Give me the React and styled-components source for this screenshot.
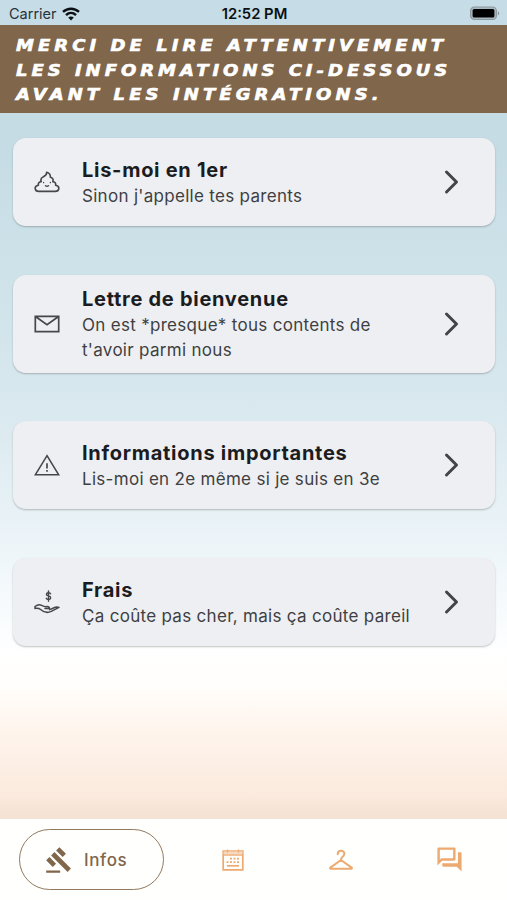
import React from "react";
import styled, { createGlobalStyle } from "styled-components";
import { MdGavel, MdOutlineQuestionAnswer } from "react-icons/md";

const infos = [
  {
    icon: <PooIcon />,
    title: "Lis-moi en 1er",
    text: "Sinon j'appelle tes parents",
    height: 88,
  },
  {
    icon: <MailIcon />,
    title: "Lettre de bienvenue",
    text: "On est *presque* tous contents de t'avoir parmi nous",
    height: 98,
  },
  {
    icon: <WarningIcon />,
    title: "Informations importantes",
    text: "Lis-moi en 2e même si je suis en 3e",
    height: 88,
  },
  {
    icon: <MoneyIcon />,
    title: "Frais",
    text: "Ça coûte pas cher, mais ça coûte pareil",
    height: 88,
  },
];

function App() {
  return (
    <Screen>
      <GlobalStyle />
      <StatusBar />
      <Header>
        <HeaderLine $spacing={3.38}>MERCI DE LIRE ATTENTIVEMENT</HeaderLine>
        <HeaderLine $spacing={3.32}>LES INFORMATIONS CI-DESSOUS</HeaderLine>
        <HeaderLine $spacing={3.42}>AVANT LES INTÉGRATIONS.</HeaderLine>
      </Header>
      <CardList>
        {infos.map((info) => (
          <Card key={info.title} $height={info.height}>
            <CardIcon>{info.icon}</CardIcon>
            <CardText>
              <Title>{info.title}</Title>
              <Subtitle>{info.text}</Subtitle>
            </CardText>
            <Chevron />
          </Card>
        ))}
      </CardList>
      <TabBar>
        <ActiveTab>
          <MdGavel size={28} />
          <span>Infos</span>
        </ActiveTab>
        <Tab>
          <CalendarIcon />
        </Tab>
        <Tab>
          <HangerIcon />
        </Tab>
        <Tab>
          <MdOutlineQuestionAnswer size={29} />
        </Tab>
      </TabBar>
    </Screen>
  );
}

function StatusBar() {
  return (
    <Status>
      <Carrier>
        Carrier
        <svg width="18" height="14" viewBox="0 0 18 14" fill="none">
          <g stroke="#0b1014" strokeWidth="2.5">
            <path d="M1 4.9C5.6 0.6 12.4 0.6 17 4.9" />
            <path d="M4 8.1C6.9 5.4 11.1 5.4 14 8.1" />
          </g>
          <path d="M9 13.4L6.2 10.5C7.8 9.1 10.2 9.1 11.8 10.5Z" fill="#0b1014" />
        </svg>
      </Carrier>
      <Time>12:52 PM</Time>
      <Battery>
        <svg width="31" height="15" viewBox="0 0 31 15">
          <rect x="1.6" y="1" width="25.8" height="12.5" rx="3.8" fill="#a9b9c1" stroke="#8b999f" strokeWidth="1.2" />
          <rect x="3.6" y="3" width="21.8" height="8.6" rx="1.6" fill="#000" />
          <path d="M28.8 5V9.6C30.7 8.7 30.7 5.9 28.8 5Z" fill="#8b999f" />
        </svg>
      </Battery>
    </Status>
  );
}

function PooIcon() {
  return (
    <svg width="26" height="22" viewBox="0 0 26 22" fill="none" stroke="currentColor" strokeWidth="1.6" strokeLinejoin="round" strokeLinecap="round">
      <path d="M12.6 1.3C12.9 3.7 11.2 5 9.4 5.8C7.2 6.8 6.4 8.6 7.2 10.6C5 10.8 4 12.2 4.4 14.2C2.2 14.5 1 15.8 1.2 17.6C1.4 19.4 2.8 20.4 4.8 20.4H21.2C23.2 20.4 24.6 19.4 24.8 17.6C25 15.8 23.8 14.5 21.6 14.2C22 12.2 21 10.8 18.8 10.6C19.6 8.6 18.9 6.9 16.4 6.2C16.5 3.6 15 1.9 12.6 1.3Z" />
      <path d="M9.6 11.5V11.7M16.4 11.5V11.7M11.4 14.7C12.4 15.4 13.6 15.4 14.6 14.7" strokeWidth="1.3" />
    </svg>
  );
}

function MailIcon() {
  return (
    <svg width="26" height="18" viewBox="0 0 26 18" fill="none" stroke="currentColor" strokeWidth="1.7">
      <path d="M1.3 1.3H24.7V16.7H1.3ZM1.8 1.8L13 9.6L24.2 1.8" />
    </svg>
  );
}

function WarningIcon() {
  return (
    <svg width="26" height="22" viewBox="0 0 26 22" fill="none" stroke="currentColor" strokeWidth="1.6">
      <path d="M13 1.7L24.6 20.7H1.4Z" />
      <path d="M13 9.3V14.6M13 16V17.8" strokeWidth="1.7" />
    </svg>
  );
}

function MoneyIcon() {
  return (
    <svg width="26" height="24" viewBox="0 0 26 24" fill="none" stroke="currentColor" strokeWidth="1.6" strokeLinecap="round" strokeLinejoin="round">
      <path d="M16.6 3.8C16 2.4 12.6 2.2 12.4 4.2C12.2 6.4 17 5.4 16.7 7.9C16.5 10 12.9 9.8 12.2 8.3M14.5 1V11.2" strokeWidth="1.4" />
      <path d="M1 18.4V16.5C3.2 14.7 5.6 14.2 7.6 15.3C9.4 16.3 10.8 16.8 12.8 16.6C14.8 16.4 15.6 17.6 15.3 18.4H11M1 18.4C3.2 18 4.8 18 6.6 19.5C9.8 22.4 13.6 23.1 17.2 21.4L25 17.4C23.2 16.8 21.4 17.1 19.4 18L15.6 19.6" strokeWidth="1.5" />
    </svg>
  );
}

function CalendarIcon() {
  return (
    <svg width="22" height="22" viewBox="0 0 22 22" fill="none" stroke="currentColor">
      <path d="M1.2 2H20.8V20.8H1.2Z" strokeWidth="1.7" />
      <path d="M1.5 4H20.5" stroke="#f7d9bf" strokeWidth="2.6" />
      <path d="M1.2 6H20.8" strokeWidth="1.4" />
      <path d="M5.5 0.5V3.5M16.5 0.5V3.5" strokeWidth="1.3" />
      <path d="M8 9.6H18M4.5 13.2H18" strokeWidth="1.8" strokeDasharray="2 1.5" />
      <path d="M5 16.8H17" strokeWidth="1.7" />
    </svg>
  );
}

function HangerIcon() {
  return (
    <svg width="26" height="22" viewBox="0 0 26 22" fill="none" stroke="currentColor" strokeWidth="2" strokeLinejoin="round" strokeLinecap="round">
      <path d="M9.7 5.2C9.7 0.8 16.4 0.8 16.4 4.8C16.4 7.6 13 7.5 13 11L23.6 18.6C24.2 19.1 24 19.8 23.2 19.8H2.8C2 19.8 1.8 19.1 2.4 18.6L13 11" />
    </svg>
  );
}

function Chevron() {
  return (
    <ChevronSvg width="16" height="26" viewBox="0 0 16 26">
      <path d="M2.5 3L12.5 13L2.5 23" />
    </ChevronSvg>
  );
}

const GlobalStyle = createGlobalStyle`
  * {
    box-sizing: border-box;
  }

  body {
    margin: 0;
    font-family: Inter, sans-serif;
  }
`;

const Screen = styled.div`
  height: 900px;

  display: flex;
  flex-direction: column;

  background: linear-gradient(
    #c6dce6 0px,
    #c6dce5 150px,
    #cee2e9 270px,
    #d8e8ee 400px,
    #e7f1f6 510px,
    #f4f9fc 590px,
    #ffffff 655px,
    #fffdfa 690px,
    #fff6ef 722px,
    #fdf0e7 755px,
    #fbeadd 795px,
    #f3e1d3 819px
  );
`;

const Status = styled.div`
  height: 25px;
  flex-shrink: 0;
  padding: 2px 7px 0 9px;

  display: grid;
  grid-template-columns: 1fr auto 1fr;
  align-items: center;

  color: #0b1014;
  font-size: 14.5px;
`;

const Carrier = styled.div`
  display: flex;
  align-items: center;
  gap: 5px;
  color: #26323a;
`;

const Time = styled.div`
  font-weight: 600;
  font-size: 14.8px;
`;

const Battery = styled.div`
  display: flex;
  justify-content: flex-end;
`;

const Header = styled.header`
  height: 88px;
  flex-shrink: 0;
  padding: 9px 16px 0;

  background-color: #80664b;
  color: #fff;
`;

const HeaderLine = styled.div`
  width: fit-content;
  font-family: "DejaVu Sans", sans-serif;
  font-size: 15px;
  font-weight: 700;
  font-style: italic;
  line-height: 24.5px;
  letter-spacing: ${({ $spacing }) => $spacing}px;
  white-space: nowrap;
  /* widen the letters without making them taller */
  transform: scaleX(1.2);
  transform-origin: left center;
  -webkit-text-stroke: 0.6px #fff;
`;

const CardList = styled.main`
  flex: 1;
  padding: 25px 12px 0 13px;

  display: flex;
  flex-direction: column;
  gap: 48.7px;
`;

const Card = styled.section`
  height: ${({ $height }) => $height}px;
  padding: 0 35px 0 21px;

  display: flex;
  align-items: center;

  background-color: #eeeff2;
  border-radius: 13px;
  box-shadow: 0 1px 2px rgba(0, 0, 0, 0.24);
`;

const CardIcon = styled.div`
  width: 48px;
  display: flex;
  color: #46474a;
`;

const CardText = styled.div`
  width: 340px;
  padding-top: 1px;
`;

const Title = styled.h2`
  margin: 0;
  color: #1b1c1f;
  font-size: 20px;
  font-weight: 700;
  line-height: 27px;
  letter-spacing: 0.72px;
`;

const Subtitle = styled.p`
  margin: 0;
  color: #3e3f42;
  font-size: 17px;
  line-height: 24.5px;
  letter-spacing: 0.3px;
`;

const ChevronSvg = styled.svg`
  margin-left: auto;
  fill: none;
  stroke: #434447;
  stroke-width: 3;
  stroke-linecap: round;
  stroke-linejoin: round;
`;

const TabBar = styled.nav`
  height: 81px;
  flex-shrink: 0;
  padding: 0 4px 0 19px;

  display: flex;
  align-items: center;

  background-color: #fffffe;
`;

const ActiveTab = styled.div`
  width: 145px;
  height: 61px;
  margin-right: 15px;
  padding-left: 25px;

  display: flex;
  align-items: center;
  gap: 11px;

  border: 1.5px solid #92795f;
  border-radius: 31px;
  color: #80664b;
  font-size: 17px;
  font-weight: 500;
  letter-spacing: 0.6px;
`;

const Tab = styled.div`
  flex: 1;
  display: flex;
  justify-content: center;
  color: #edaa70;
`;

export default App;
